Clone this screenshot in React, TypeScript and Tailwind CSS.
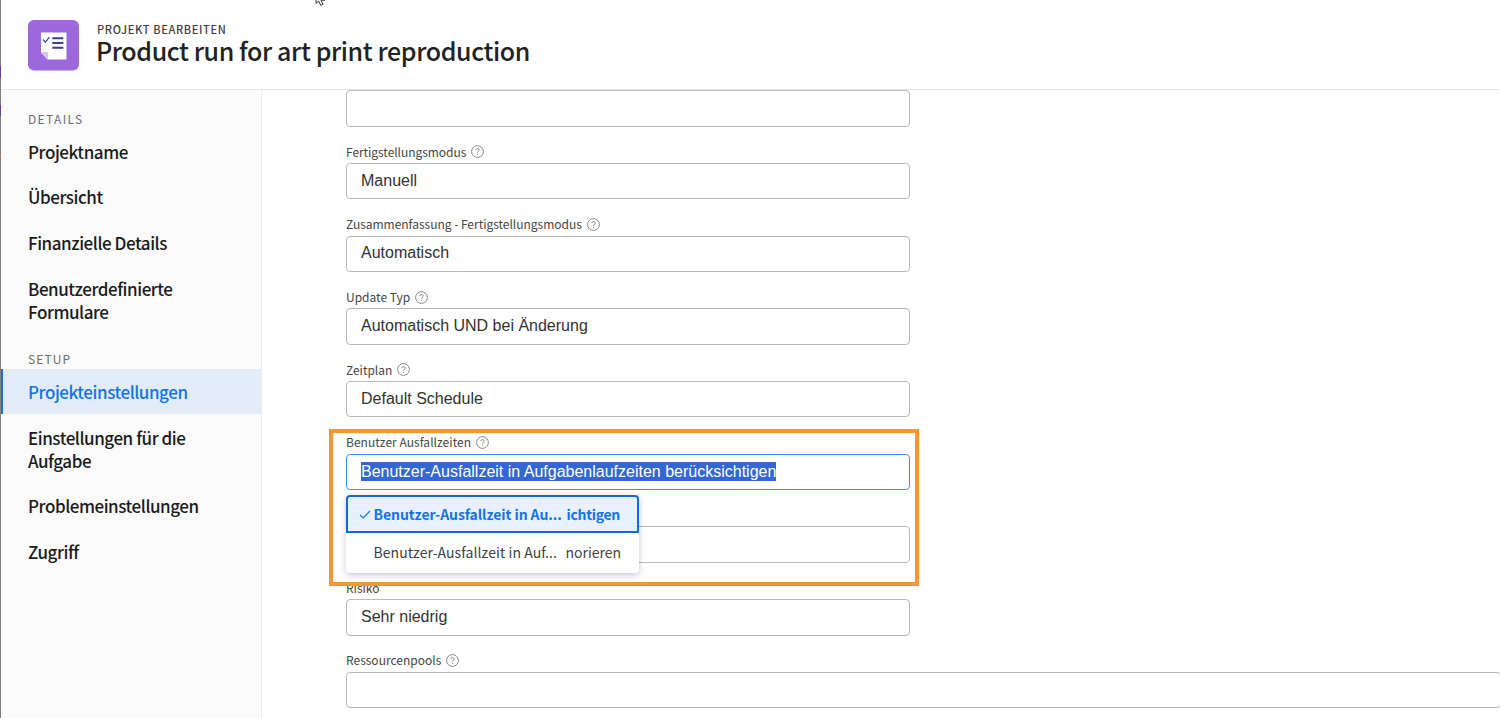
import React from "react";

const Help = () => (
  <svg className="h-[13px] w-[13px] shrink-0" viewBox="0 0 13 13" fill="none" stroke="#7c7c7c">
    <circle cx="6.5" cy="6.5" r="5.9" strokeWidth="0.9" />
    <path d="M4.9 5.2c0-1 .7-1.6 1.6-1.6s1.6.6 1.6 1.5c0 1.1-1.5 1.2-1.5 2.5" strokeWidth="1" />
    <path d="M6.6 8.7v1.1" strokeWidth="1.1" />
  </svg>
);

type FieldProps = {
  label: string;
  labelClass?: string;
  value?: string;
  help?: boolean;
  active?: boolean;
  wide?: boolean;
  children?: React.ReactNode;
};

const Field = ({ label, labelClass = "", value = "", help = true, active, wide, children }: FieldProps) => (
  <div className={`relative flex h-[72.7px] shrink-0 flex-col justify-end ${wide ? "w-[1154.5px]" : "w-[564px]"}`}>
    <div className="flex h-[22px] items-center gap-[5px] pb-[0.5px] text-[12px] leading-[20px] text-[#454545]">
      <span className={`whitespace-nowrap ${labelClass}`}>{label}</span>
      {help && <Help />}
    </div>
    <div
      className={`flex h-[36.5px] items-center rounded-[4px] border bg-white pb-[0.8px] pl-[14px] font-['Liberation_Sans',sans-serif] text-[16px] leading-[18px] text-[#323232] ${active ? "border-[#3f8ce8]" : "border-[#b9b9b9]"}`}
    >
      {active ? <span className="whitespace-nowrap bg-[#3367d1] leading-[19px] text-white">{value}</span> : <span className="whitespace-nowrap">{value}</span>}
    </div>
    {children}
  </div>
);

const NavItem = ({ children, active, two }: { children: React.ReactNode; active?: boolean; two?: boolean }) => (
  <div
    className={`flex items-center border-l-2 pl-[25px] text-[17px] font-medium leading-[23px] tracking-[-0.45px] ${two ? "h-[68.6px]" : "h-[45.7px]"} ${active ? "border-[#1473e6] bg-[#e2ecf7] text-[#1473e6]" : "border-transparent text-[#1a1a1a]"}`}
  >
    <span className="whitespace-nowrap">{children}</span>
  </div>
);

const Menu = () => (
  <div className="absolute left-0 top-[78px] z-10 h-[78px] w-[293px] rounded-[4px] bg-white text-[14px] shadow-[0_2px_6px_rgba(40,60,90,0.28)]">
    <div className="flex h-[38px] items-center rounded-t-[4px] border-2 border-[#1168e3] bg-[#e8f1fb] pl-[11px] font-bold tracking-[-0.08px] text-[#1473e6]">
      <svg className="mr-[2.5px] h-[9px] w-[12px]" viewBox="0 0 12 9" fill="none" stroke="#1473e6" strokeWidth="1.2">
        <path d="M1 4.8 4.2 8 11 1" />
      </svg>
      <span className="w-[193px] whitespace-nowrap">Benutzer-Ausfallzeit in Au...</span>
      <span className="whitespace-nowrap tracking-[-0.3px]">ichtigen</span>
    </div>
    <div className="flex h-[39px] items-center pl-[27.5px] text-[#3f3f3f]">
      <span className="w-[192px] whitespace-nowrap tracking-[0.07px]">Benutzer-Ausfallzeit in Auf...</span>
      <span className="whitespace-nowrap">norieren</span>
    </div>
  </div>
);

export default function App() {
  return (
    <div className="relative flex h-[718px] w-[1500px] overflow-hidden bg-white font-['Noto_Sans_CJK_SC',sans-serif]">
      <div className="flex w-px shrink-0 flex-col bg-[#808080] pt-[66px]">
        <div className="h-[12px] bg-[#6a4096]" />
        <div className="mt-[27px] h-[11px] bg-[#6a4096]" />
        <div className="mt-[39px] h-[2px] bg-[#c58b3c]" />
      </div>
      <div className="flex min-w-0 flex-1 flex-col">
        <header className="flex h-[90px] shrink-0 border-b border-[#e6e6e6] pl-[27px] pt-[20px]">
          <svg className="h-[51px] w-[51px]" viewBox="0 0 51 51">
            <rect width="51" height="50.5" rx="6" fill="#9c68dc" />
            <path d="M13 12.5h25.5v27H19.5L13 32.5z" fill="#fff" />
            <path d="M13 32h7v7.5z" fill="#d8c3ee" />
            <path d="m15 19.5 2.4 2.6 4-5" fill="none" stroke="#35418c" strokeWidth="1.2" />
            <path d="M24.3 18.3h11M24.3 23h11M24.3 27.7h11" stroke="#35418c" strokeWidth="2.1" />
          </svg>
          <div className="flex flex-col pl-[17px]">
            <div className="mt-[2px] whitespace-nowrap pl-px text-[11px] font-medium leading-[14px] tracking-[0.65px] text-[#404040]">PROJEKT BEARBEITEN</div>
            <h1 className="whitespace-nowrap text-[25px] font-medium leading-[29px] tracking-[-0.4px] text-[#222]">Product run for art print reproduction</h1>
          </div>
        </header>
        <div className="flex min-h-0 flex-1">
          <nav className="flex w-[261px] shrink-0 flex-col border-r border-[#ececec] bg-[#fafafa]">
            <div className="mt-[19px] h-[19.3px] pl-[27px] text-[12px] leading-[20px] tracking-[1.35px] text-[#6e6e6e]">DETAILS</div>
            <NavItem>Projektname</NavItem>
            <NavItem>Übersicht</NavItem>
            <NavItem>Finanzielle Details</NavItem>
            <NavItem two>Benutzerdefinierte<br />Formulare</NavItem>
            <div className="mt-[14.8px] h-[19.8px] pl-[27px] text-[12px] leading-[20px] tracking-[1.1px] text-[#6e6e6e]">SETUP</div>
            <NavItem active>Projekteinstellungen</NavItem>
            <NavItem two>Einstellungen für die<br />Aufgabe</NavItem>
            <NavItem>Problemeinstellungen</NavItem>
            <NavItem>Zugriff</NavItem>
          </nav>
          <main className="flex min-w-0 flex-1 flex-col overflow-hidden pl-[84px]">
            <div className="-mt-[36px] flex flex-col">
              <Field label="" help={false} />
              <Field label="Fertigstellungsmodus" labelClass="tracking-[-0.05px]" value="Manuell" />
              <Field label="Zusammenfassung - Fertigstellungsmodus" labelClass="tracking-[-0.02px]" value="Automatisch" />
              <Field label="Update Typ" value="Automatisch UND bei Änderung" />
              <Field label="Zeitplan" value="Default Schedule" />
              <Field label="Benutzer Ausfallzeiten" labelClass="tracking-[0.03px]" value="Benutzer-Ausfallzeit in Aufgabenlaufzeiten berücksichtigen" active>
                <Menu />
              </Field>
              <Field label="" help={false} />
              <Field label="Risiko" value="Sehr niedrig" help={false} />
              <Field label="Ressourcenpools" wide />
            </div>
          </main>
        </div>
      </div>
      <div className="absolute left-[329px] top-[429px] z-20 h-[157px] w-[590px] border-4 border-[#f29736]" />
      <svg className="absolute left-[315px] top-0 h-[6px] w-[11px]" viewBox="0 0 11 6" fill="#fff" stroke="#333" strokeWidth="1">
        <path d="M1-4V3.4L3.6 1 5.8 5.4 8 4.4 6 .2H10z" />
      </svg>
    </div>
  );
}
